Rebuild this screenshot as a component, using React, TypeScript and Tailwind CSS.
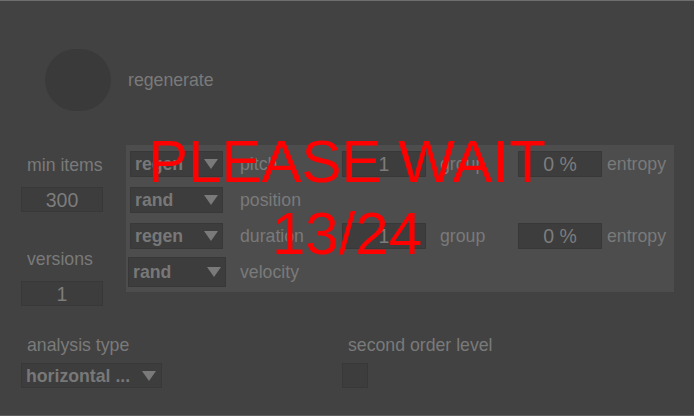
const label = 'text-[17.7px] leading-[20px] text-[#7a7a7a] whitespace-nowrap'

function Arrow() {
  return (
    <svg width="14" height="10" viewBox="0 0 14 10" className="shrink-0">
      <polygon points="0,0 14,0 7,10" fill="#7a7a7a" />
    </svg>
  )
}

function Menu({ value, className = '' }: { value: string; className?: string }) {
  return (
    <div
      className={`flex items-center justify-between pl-[4px] pr-[4px] bg-[#3d3d3d] border border-[#383838] ${className}`}
    >
      <span className="text-[17.7px] leading-[20px] font-bold text-[#787878] whitespace-nowrap">{value}</span>
      <Arrow />
    </div>
  )
}

function NumBox({ value, className = '' }: { value: string; className?: string }) {
  return (
    <div
      className={`flex items-center justify-center bg-[#3d3d3d] border border-[#383838] text-[19.5px] leading-[20px] text-[#7c7c7c] ${className}`}
    >
      {value}
    </div>
  )
}

// one row of the parameter panel: mode menu, name, optional group + entropy
function ParamRow({ mode, name, group }: { mode: string; name: string; group?: string }) {
  return (
    <div className="flex items-center h-[26px]">
      <Menu value={mode} className="w-[93px] h-[26px]" />
      <span className={`${label} ml-[17px] w-[102px]`}>{name}</span>
      {group && (
        <>
          <NumBox value={group} className="w-[84px] h-[26px]" />
          <span className={`${label} ml-[14px] w-[78px]`}>group</span>
          <NumBox value="0 %" className="w-[84px] h-[26px]" />
          <span className={`${label} ml-[5px]`}>entropy</span>
        </>
      )}
    </div>
  )
}

export default function App() {
  return (
    <div
      className="relative w-[694px] h-[416px] overflow-hidden bg-[#424242] border-t border-b border-t-[#6e6e6e] border-b-[#5c5c5c] select-none"
      style={{ fontFamily: '"Liberation Sans", Arial, sans-serif' }}
    >
      {/* regenerate button */}
      <div className="flex items-center mt-[48px] pl-[45px]">
        <div className="w-[66px] h-[62px] rounded-full bg-[#3a3a3a]" />
        <span className={`${label} ml-[17px]`}>regenerate</span>
      </div>

      <div className="flex items-start mt-[34px] pl-[21px]">
        <div className="flex flex-col w-[82px] pt-[10px]">
          <span className={`${label} pl-[6px]`}>min items</span>
          <NumBox value="300" className="mt-[12px] h-[25px]" />
          <span className={`${label} pl-[6px] mt-[37px]`}>versions</span>
          <NumBox value="1" className="mt-[12px] h-[25px]" />
        </div>

        <div className="flex flex-col ml-[23px] w-[548px] h-[147px] bg-[#4d4d4d] pt-[6px] pl-[4px]">
          <ParamRow mode="regen" name="pitch" group="1" />
          <div className="mt-[10px]">
            <ParamRow mode="rand" name="position" />
          </div>
          <div className="mt-[10px]">
            <ParamRow mode="regen" name="duration" group="1" />
          </div>
          <div className="flex items-center mt-[8px] -ml-[2px]">
            <Menu value="rand" className="w-[98px] h-[30px]" />
            <span className={`${label} ml-[14px]`}>velocity</span>
          </div>
        </div>
      </div>

      <div className="flex mt-[29px] pl-[21px]">
        <div className="flex flex-col w-[321px]">
          <span className={`${label} pl-[6px]`}>analysis type</span>
          <Menu value="horizontal ..." className="mt-[8px] w-[141px] h-[25px] pr-[5px]" />
        </div>
        <div className="flex flex-col">
          <span className={`${label} pl-[6px]`}>second order level</span>
          <div className="mt-[8px] w-[26px] h-[25px] bg-[#3d3d3d] border border-[#383838]" />
        </div>
      </div>

      {/* busy overlay */}
      <div className="absolute inset-x-0 top-[125px] flex flex-col items-center text-[60px] leading-[72px] text-[#ff0000] pointer-events-none">
        <span>PLEASE WAIT</span>
        <span>13/24</span>
      </div>
    </div>
  )
}
